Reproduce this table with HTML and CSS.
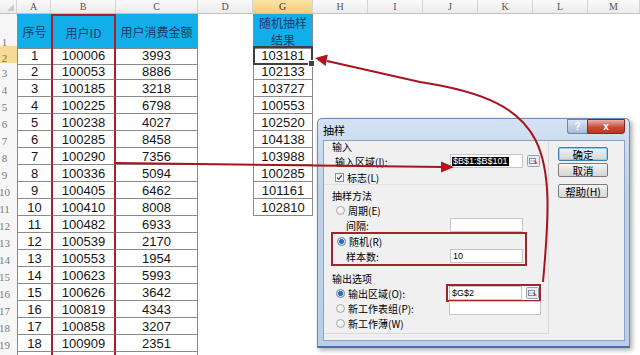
FILE: index.html
```html
<!DOCTYPE html>
<html>
<head>
<meta charset="utf-8">
<title>抽样</title>
<link rel="stylesheet" href="styles.css">
</head>
<body>
<div class="sheet">
  <div class="row hdr">
    <div class="corner"><span class="tri"></span></div>
    <div class="ch">A</div><div class="ch">B</div><div class="ch">C</div><div class="ch">D</div>
    <div class="ch sel">G</div><div class="ch">H</div><div class="ch">I</div><div class="ch">J</div>
    <div class="ch">K</div><div class="ch">L</div><div class="ch">M</div>
  </div>
  <div class="row r1">
    <div class="rh">1</div>
    <div class="c a th">序号</div><div class="c b th bt">用户ID</div><div class="c cc th">用户消费金额</div>
    <div></div><div class="c g th">随机抽样<br>结果</div>
  </div>
  <div class="row"><div class="rh act">2</div><div class="c a">1</div><div class="c b">100006</div><div class="c cc">3993</div><div></div><div class="c g cur">103181</div></div>
  <div class="row"><div class="rh">3</div><div class="c a">2</div><div class="c b">100053</div><div class="c cc">8886</div><div></div><div class="c g">102133</div></div>
  <div class="row"><div class="rh">4</div><div class="c a">3</div><div class="c b">100185</div><div class="c cc">3218</div><div></div><div class="c g">103727</div></div>
  <div class="row"><div class="rh">5</div><div class="c a">4</div><div class="c b">100225</div><div class="c cc">6798</div><div></div><div class="c g">100553</div></div>
  <div class="row"><div class="rh">6</div><div class="c a">5</div><div class="c b">100238</div><div class="c cc">4027</div><div></div><div class="c g">102520</div></div>
  <div class="row"><div class="rh">7</div><div class="c a">6</div><div class="c b">100285</div><div class="c cc">8458</div><div></div><div class="c g">104138</div></div>
  <div class="row"><div class="rh">8</div><div class="c a">7</div><div class="c b">100290</div><div class="c cc">7356</div><div></div><div class="c g">103988</div></div>
  <div class="row"><div class="rh">9</div><div class="c a">8</div><div class="c b">100336</div><div class="c cc">5094</div><div></div><div class="c g">100285</div></div>
  <div class="row"><div class="rh">10</div><div class="c a">9</div><div class="c b">100405</div><div class="c cc">6462</div><div></div><div class="c g">101161</div></div>
  <div class="row"><div class="rh">11</div><div class="c a">10</div><div class="c b">100410</div><div class="c cc">8008</div><div></div><div class="c g">102810</div></div>
  <div class="row"><div class="rh">12</div><div class="c a">11</div><div class="c b">100482</div><div class="c cc">6933</div></div>
  <div class="row"><div class="rh">13</div><div class="c a">12</div><div class="c b">100539</div><div class="c cc">2170</div></div>
  <div class="row"><div class="rh">14</div><div class="c a">13</div><div class="c b">100553</div><div class="c cc">1954</div></div>
  <div class="row"><div class="rh">15</div><div class="c a">14</div><div class="c b">100623</div><div class="c cc">5993</div></div>
  <div class="row"><div class="rh">16</div><div class="c a">15</div><div class="c b">100626</div><div class="c cc">3642</div></div>
  <div class="row"><div class="rh">17</div><div class="c a">16</div><div class="c b">100819</div><div class="c cc">4343</div></div>
  <div class="row"><div class="rh">18</div><div class="c a">17</div><div class="c b">100858</div><div class="c cc">3207</div></div>
  <div class="row"><div class="rh">19</div><div class="c a">18</div><div class="c b">100909</div><div class="c cc">2351</div></div>
  <div class="row"><div class="rh"></div><div class="c a"></div><div class="c b"></div><div class="c cc"></div></div>

  <div class="dlg">
    <div class="dlg-title">
      <span class="dlg-name">抽样</span>
      <div class="tbtns"><div class="tb help">?</div><div class="tb close">x</div></div>
    </div>
    <div class="dlg-panel">
      <div class="form">
        <div class="fr sec h-in">输入</div>
        <div class="fr f-range">
          <span class="lbl">输入区域(I):</span>
          <div class="fld"><span class="hl">$B$1:$B$101</span></div>
          <div class="rb"><svg width="13" height="12" viewBox="0 0 13 12"><rect x="0.5" y="0.5" width="12" height="11" rx="1" fill="#e6ecf4" stroke="#93a3bb"/><rect x="2.5" y="3.5" width="6" height="5" fill="#fff" stroke="#7d8ea8"/><line x1="2.5" y1="6" x2="8.5" y2="6" stroke="#9aa9bf"/><path d="M7 5 L11 8.5 L8 8.5 Z" fill="#d42a2a"/></svg></div>
        </div>
        <div class="fr f-chk"><span class="chk"><svg width="9" height="9" viewBox="0 0 9 9"><path d="M1.5 4.5 L3.5 6.8 L7.5 1.8" fill="none" stroke="#2d3f76" stroke-width="1.5"/></svg></span><span>标志(L)</span></div>
        <div class="fr sec h-m">抽样方法</div>
        <div class="fr opt r-per"><span class="radio"></span>周期(E)</div>
        <div class="fr sub r-int"><span class="lbl">间隔:</span><div class="fld"></div><div class="sp"></div></div>
        <div class="redbox">
          <div class="fr opt r-rand"><span class="radio on"></span>随机(R)</div>
          <div class="fr sub r-num"><span class="lbl">样本数:</span><div class="fld txt">10</div></div>
        </div>
        <div class="fr sec h-out">输出选项</div>
        <div class="fr opt r-o1"><span class="radio on"></span><span class="lbl">输出区域(O):</span>
          <div class="outbox"><div class="fld txt">$G$2</div><div class="rb"><svg width="13" height="12" viewBox="0 0 13 12"><rect x="0.5" y="0.5" width="12" height="11" rx="1" fill="#e6ecf4" stroke="#93a3bb"/><rect x="2.5" y="3.5" width="6" height="5" fill="#fff" stroke="#7d8ea8"/><line x1="2.5" y1="6" x2="8.5" y2="6" stroke="#9aa9bf"/><path d="M7 5 L11 8.5 L8 8.5 Z" fill="#d42a2a"/></svg></div></div>
        </div>
        <div class="fr opt r-o2"><span class="radio"></span><span class="lbl">新工作表组(P):</span><div class="fld wide"></div></div>
        <div class="fr opt r-o3"><span class="radio"></span>新工作薄(W)</div>
      </div>
      <div class="btns">
        <div class="btn def">确定</div>
        <div class="btn">取消</div>
        <div class="btn gap">帮助(H)</div>
      </div>
    </div>
  </div>

  <svg class="arrows" width="640" height="355" viewBox="0 0 640 355">
    <line x1="116" y1="163" x2="443" y2="167" stroke="#a8141e" stroke-width="2"/>
    <polygon points="454,167 441,161.5 441,172.5" fill="#b3141e"/>
    <path d="M543 282 C555 150 552 102 420 82 L327 61" fill="none" stroke="#a8141e" stroke-width="2"/>
    <polygon points="315,58 327.8,54.6 325.6,66" fill="#b3141e"/>
  </svg>
</div>
</body>
</html>
```

FILE: styles.css
```css
* { box-sizing: border-box; margin: 0; padding: 0; }
html, body { width: 640px; height: 355px; overflow: hidden; background: #fff; }
body { font-family: "Liberation Sans", "Noto Sans CJK SC", sans-serif; color: #111; }

.sheet { position: relative; width: 640px; height: 355px; overflow: hidden; background: #fff; }

.row {
  display: grid;
  grid-template-columns: 17px 34px 65px 82px 55px 60px 55px 55px 55px 55px 55px 52px;
  height: 17px;
}
.hdr { height: 14px; background: linear-gradient(#fafafa, #ebebeb); border-bottom: 1px solid #c3c3c3; }
.r1 { height: 32px; }

.corner { position: relative; border-right: 1px solid #d4d4d4; }
.tri { position: absolute; right: 2px; bottom: 2px; width: 0; height: 0;
  border-left: 7px solid transparent; border-bottom: 7px solid #c9c9c9; }
.ch {
  display: flex; align-items: center; justify-content: center;
  font-family: "Liberation Serif", serif; font-size: 10px; color: #555;
  border-right: 1px solid #d4d4d4;
}
.ch.sel { background: linear-gradient(#fbe3a6, #f6cc78); color: #333; }

.rh {
  display: flex; align-items: flex-end; justify-content: center;
  padding-right: 8px; padding-bottom: 1px;
  font-family: "Liberation Serif", serif; font-size: 11px; color: #7a7a7a;
  background: #f6f6f6; white-space: nowrap;
}
.rh.act { background: #f8d995; color: #8a6a2a; }

.c {
  display: flex; align-items: center; justify-content: center;
  font-size: 13px; color: #151515; white-space: nowrap;
  border-bottom: 1px solid #8a8a8a;
}
.c.a { border-left: 1px solid #8a8a8a; }
.c.b { border-left: 2px solid #a3222c; border-right: 2px solid #a3222c; }
.c.cc { border-right: 1px solid #8a8a8a; }
.c.g { border-left: 1px solid #8a8a8a; border-right: 1px solid #8a8a8a; }
.c.th {
  background: #12aeea; color: #1b3a66;
  font-family: "Noto Sans CJK SC", sans-serif; font-size: 12px; text-align: center; line-height: 17px;
}
.c.bt { border-top: 2px solid #a3222c; }
.c.cur { position: relative; border: 2px solid #404040; }
.c.cur::after { content: ""; position: absolute; right: -4px; bottom: -4px; width: 5px; height: 5px;
  background: #404040; border: 1px solid #fff; }

/* dialog */
.dlg {
  position: absolute; left: 317px; top: 118px; width: 313px; height: 230px;
  background: linear-gradient(#d4e2f3, #bed2ea 30%, #b9cee8);
  border: 1px solid #6c8ab4; border-bottom: 2px solid #4b6fa3;
  border-radius: 5px 5px 0 0;
  box-shadow: 2px 2px 5px rgba(0,0,0,0.35);
  display: flex; flex-direction: column;
  font-family: "Noto Sans CJK SC", sans-serif; font-size: 10px; color: #000;
  z-index: 2;
}
.dlg-title { height: 21px; display: flex; justify-content: space-between; padding: 0 4px 0 5px; }
.dlg-name { line-height: 21px; padding-top: 1px; font-size: 11px; }
.tbtns { display: flex; align-self: flex-start; }
.tb { height: 15px; display: flex; align-items: center; justify-content: center;
  color: #fff; font-family: "Liberation Sans", sans-serif; font-weight: bold; font-size: 10px; }
.tb.help { width: 20px; background: linear-gradient(#dbe6f3, #a5bcd8); border: 1px solid #6d86aa; border-right: none; border-radius: 0 0 0 3px; }
.tb.close { width: 38px; background: linear-gradient(#eab1a5, #c7472f 60%, #b93a25); border: 1px solid #7f2a1f; border-radius: 0 0 3px 0; }

.dlg-panel {
  margin: 0 4px 0 5px; height: 201px;
  background: #f0f0f0; border: 1px solid #8ea3c0;
  display: flex;
}
.form {
  width: 225px; height: 193px;
  border-right: 1px solid #dadada; border-bottom: 1px solid #dadada;
  display: flex; flex-direction: column;
}
.fr { display: flex; align-items: center; height: 14px; line-height: 11px; white-space: nowrap; flex: none; }
.sec { padding-left: 8px; }
.h-in { height: 10px; }
.f-range { height: 20px; padding-left: 11px; padding-right: 8px; }
.f-chk { height: 14px; padding-left: 11px; border-bottom: 1px solid #e2e2e2; }
.h-m { height: 20px; }
.opt { padding-left: 12px; padding-right: 7px; }
.sub { padding-left: 22px; padding-right: 8px; }
.r-per { height: 10px; }
.r-int { margin-top: 3px; }
.lbl { flex: 1; }

.chk { width: 9px; height: 9px; margin-right: 3px; border: 1px solid #8e8f8f;
  background: linear-gradient(#f4f4f4, #fff); display: flex; align-items: center; justify-content: center; }
.chk svg { display: block; }
.radio { width: 9px; height: 9px; border-radius: 50%; margin-right: 3px; flex: none;
  border: 1px solid #a9a9a9; background: radial-gradient(circle at 40% 35%, #fff, #dedede); }
.radio.on { border-color: #6f7f96; background: radial-gradient(circle, #2c6fc1 0 2.2px, #cfe0f3 2.6px, #f1f1f1 4px); }

.fld { width: 73px; height: 14px; flex: none; background: #fff; border: 1px solid #c3c7cd;
  font-family: "Liberation Sans", sans-serif; font-size: 9px; display: flex; align-items: center; padding-left: 1px; }
.fld.txt { padding-left: 2px; }
.fld.wide { width: 92px; }
.hl { background: #000; color: #fff; line-height: 9px; padding: 0 1px; }
.rb { width: 13px; height: 12px; margin-left: 4px; flex: none; }
.rb svg { display: block; }
.sp { width: 17px; flex: none; }

.redbox { margin-left: 7px; width: 196px; border: 2px solid #a3222c; display: flex; flex-direction: column; }
.redbox .opt { padding-left: 4px; }
.redbox .sub { padding-left: 13px; padding-right: 2px; }
.r-rand { height: 14px; }
.r-num { height: 16px; }
.h-out { margin-top: 5px; }
.r-o1 { height: 16px; }
.outbox { display: flex; align-items: center; height: 18px; border: 2px solid #a3222c; padding-left: 1px; background: #fff; }
.r-o3 { margin-top: 1px; }

.btns { display: flex; flex-direction: column; padding-top: 6px; margin-left: 9px; font-size: 10.5px; }
.btn { width: 50px; height: 14px; margin-bottom: 2px; display: flex; align-items: center; justify-content: center;
  border: 1px solid #7a7a7a; border-radius: 2px; background: linear-gradient(#f6f6f6, #e3e3e3 50%, #d6d6d6); line-height: 11px; }
.btn.def { border-color: #3c7fb1; box-shadow: inset 0 0 0 1px #8fd0f0; }
.btn.gap { margin-top: 5px; }

.arrows { position: absolute; left: 0; top: 0; z-index: 3; pointer-events: none; }
```
